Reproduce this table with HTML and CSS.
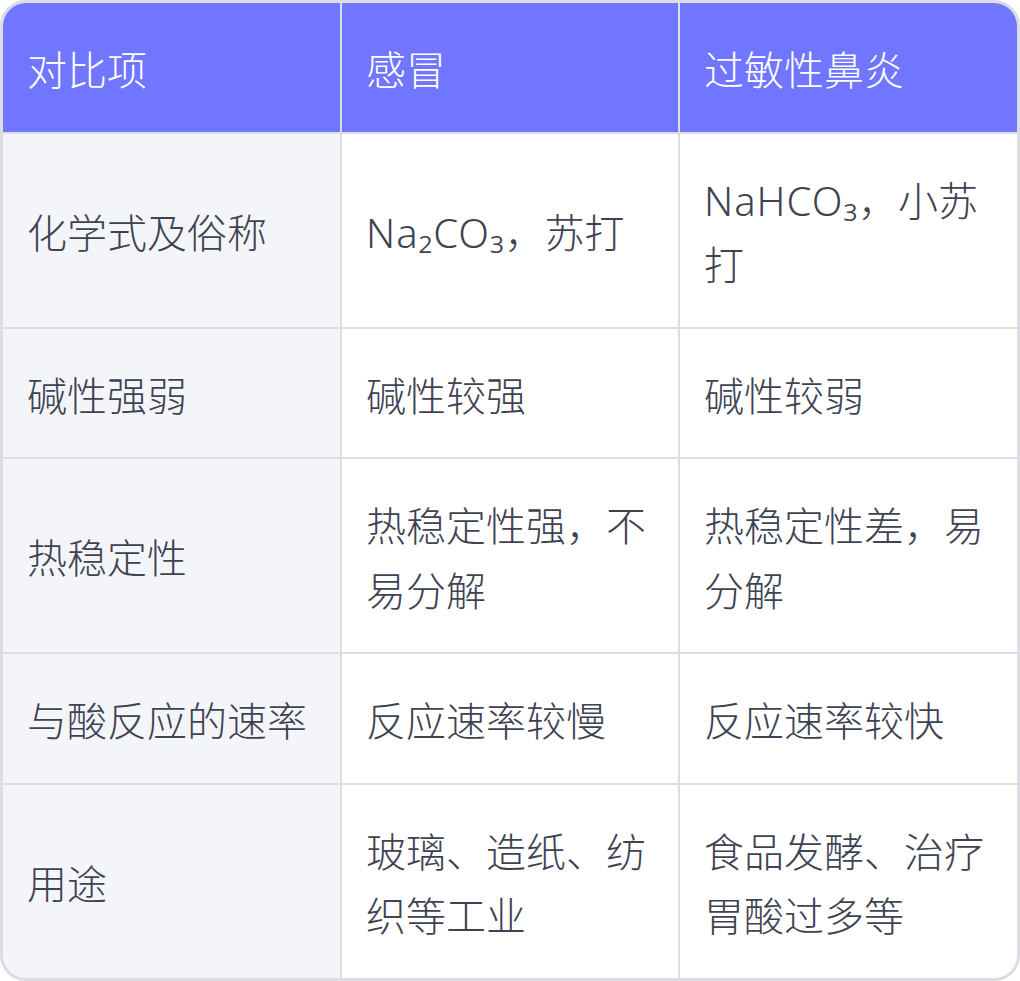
FILE: index.html
```html
<!DOCTYPE html>
<html lang="zh-CN">
<head>
<meta charset="utf-8">
<title>对比表</title>
<link rel="stylesheet" href="styles.css">
</head>
<body>
<div class="card">
  <table class="cmp">
    <thead>
      <tr>
        <th>对比项</th>
        <th>感冒</th>
        <th>过敏性鼻炎</th>
      </tr>
    </thead>
    <tbody>
      <tr>
        <td>化学式及俗称</td>
        <td><span class="chem">Na₂CO₃</span>，苏打</td>
        <td><span class="chem">NaHCO₃</span>，小苏打</td>
      </tr>
      <tr>
        <td>碱性强弱</td>
        <td>碱性较强</td>
        <td>碱性较弱</td>
      </tr>
      <tr>
        <td>热稳定性</td>
        <td>热稳定性强，不易分解</td>
        <td>热稳定性差，易分解</td>
      </tr>
      <tr>
        <td>与酸反应的速率</td>
        <td>反应速率较慢</td>
        <td>反应速率较快</td>
      </tr>
      <tr>
        <td>用途</td>
        <td>玻璃、造纸、纺织等工业</td>
        <td>食品发酵、治疗胃酸过多等</td>
      </tr>
    </tbody>
  </table>
</div>
</body>
</html>
```

FILE: styles.css
```css
html, body {
  margin: 0;
  padding: 0;
  background: #ffffff;
}

body {
  font-family: "Noto Sans", "Noto Sans CJK SC", sans-serif;
  font-weight: 300;
  color: #3e4252;
}

.card {
  width: 1020px;
  box-sizing: border-box;
  border: 3px solid #dcdde3;
  border-radius: 26px;
  overflow: hidden;
  background: #ffffff;
}

.cmp {
  width: 100%;
  border-collapse: collapse;
  table-layout: fixed;
}

.cmp th,
.cmp td {
  padding: 35px 24px 29px;
  font-size: 40px;
  line-height: 64.5px;
  text-align: left;
  vertical-align: middle;
  border-right: 2px solid #dcdde3;
  border-bottom: 2px solid #dcdde3;
  font-weight: 300;
}

.cmp th:last-child,
.cmp td:last-child {
  border-right: none;
}

.cmp tbody tr:last-child td {
  border-bottom: none;
}

.cmp th {
  background: #7076ff;
  color: #ffffff;
}

.cmp td:first-child {
  background: #f4f5f9;
}

.chem {
  letter-spacing: 1px;
}
```
